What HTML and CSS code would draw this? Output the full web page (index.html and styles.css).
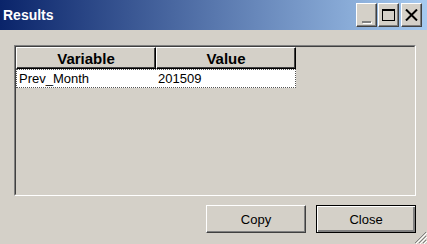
FILE: index.html
```html
<!DOCTYPE html>
<html>
<head>
<meta charset="utf-8">
<link rel="stylesheet" href="styles.css">
</head>
<body>

<div class="window">

<div class="titlebar">
<span class="title">Results</span>
<div class="caption-buttons">
<button class="cap min"><span class="min-bar"></span></button>
<button class="cap max"><span class="max-box"></span></button>
<button class="cap close">
<svg width="13" height="12" viewBox="0 0 13 12"><path d="M1 0.5 L12 11.5 M12 0.5 L1 11.5" stroke="#000" stroke-width="2"/></svg>
</button>
</div>
</div>

<div class="content">

<div class="frame">
<div class="grid">
<div class="head">
<div class="hcell">Variable</div>
<div class="hcell">Value</div>
</div>
<div class="row">
<div class="cell">Prev_Month</div>
<div class="cell">201509</div>
</div>
</div>
</div>

<div class="actions">
<button class="btn">Copy</button>
<button class="btn default">Close</button>
</div>

</div>

<div class="grip">
<svg width="14" height="14" viewBox="0 0 14 14">
<path d="M13 2 L2 13 M13 6 L6 13 M13 10 L10 13" stroke="#808080" stroke-width="1"/>
<path d="M14 3 L3 14 M14 7 L7 14 M14 11 L11 14" stroke="#fff" stroke-width="1"/>
</svg>
</div>

</div>

</body>
</html>
```

FILE: styles.css
```css
body {
margin: 0;
background: #d4d0c8;
font-family: "Liberation Sans", Arial, sans-serif;
}

.window {
width: 427px;
height: 244px;
display: flex;
flex-direction: column;
position: relative;
overflow: hidden;
}

/* title bar */

.titlebar {
height: 30px;
display: flex;
align-items: center;
padding-left: 3px;
padding-right: 5px;
background: linear-gradient(to right, #0a246a, #a6caf0);
}

.title {
color: #fff;
font-weight: bold;
font-size: 14px;
}

.caption-buttons {
margin-left: auto;
display: flex;
align-items: center;
}

.cap {
width: 21px;
height: 24px;
padding: 0;
background: #d4d0c8;
border: 1px solid;
border-color: #fff #404040 #404040 #fff;
box-shadow: inset -1px -1px 0 #808080;
display: flex;
align-items: center;
justify-content: center;
}

.max { margin-left: 1px; }
.close { margin-left: 2px; }

.min-bar {
width: 9px;
height: 2px;
background: #808080;
margin-top: 13px;
box-shadow: 1px 1px 0 #fff;
}

.max-box {
width: 11px;
height: 9px;
border: 1px solid #000;
border-top-width: 2px;
}

/* list frame */

.content {
flex: 1;
display: flex;
flex-direction: column;
padding: 15px 11px 0 14px;
}

.frame {
height: 151px;
box-sizing: border-box;
border: 1px solid;
border-color: #808080 #fff #fff #808080;
}

.grid {
height: 100%;
border: 1px solid;
border-color: #404040 #d4d0c8 #d4d0c8 #404040;
box-sizing: border-box;
}

.head {
display: flex;
}

.hcell {
width: 140px;
height: 22px;
box-sizing: border-box;
border: 1px solid;
border-color: #fff #000 #000 #fff;
box-shadow: inset -1px -1px 0 #404040;
font-weight: bold;
font-size: 15px;
text-align: center;
line-height: 21px;
color: #000;
}

.row {
display: flex;
width: 280px;
height: 19px;
background: #fff;
border: 1px dotted #555;
box-sizing: border-box;
}

.cell {
width: 140px;
font-size: 13px;
line-height: 17px;
padding-left: 2px;
color: #000;
}

/* buttons */

.actions {
display: flex;
justify-content: flex-end;
gap: 10px;
margin-top: 9px;
}

.btn {
width: 100px;
height: 28px;
font-family: "Liberation Sans", Arial, sans-serif;
font-size: 13px;
color: #000;
background: #d4d0c8;
border: 1px solid;
border-color: #fff #404040 #404040 #fff;
box-shadow: inset -1px -1px 0 #808080;
padding: 0;
}

.default {
border: 1px solid #000;
box-shadow: inset 1px 1px 0 #fff, inset -2px -2px 0 #808080, inset -1px -1px 0 #404040;
}

.grip {
position: absolute;
right: 0;
bottom: 0;
width: 14px;
height: 14px;
}
```
